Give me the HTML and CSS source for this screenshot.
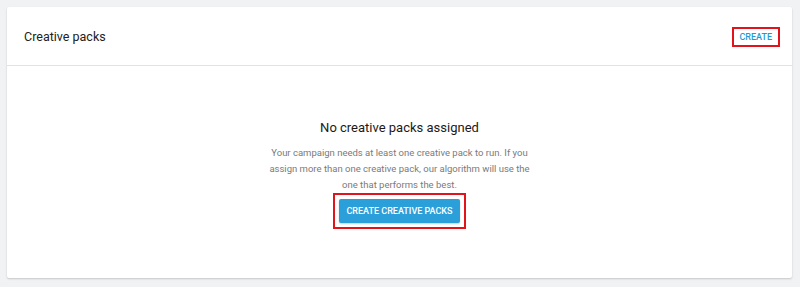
FILE: index.html
```html
<!DOCTYPE html>
<html lang="en">
<head>
    <meta charset="UTF-8">
    <meta name="viewport" content="width=device-width, initial-scale=1.0">
    <title>Creative packs</title>
    <link rel="stylesheet" href="styles.css">
</head>
<body>
    <div class="card">
        <div class="card-header">
            <span class="card-title">Creative packs</span>
            <a class="link-button marked" href="#">Create</a>
        </div>

        <!-- Пустое состояние -->
        <div class="empty-state">
            <h3>No creative packs assigned</h3>
            <p>Your campaign needs at least one creative pack to run. If you assign more than one creative pack, our algorithm will use the one that performs the best.</p>
            <span class="marked button-frame">
                <button class="primary-button">Create creative packs</button>
            </span>
        </div>
    </div>
</body>
</html>
```

FILE: styles.css
```css
body {
    font-family: Roboto, "Liberation Sans", sans-serif;
    background-color: #f1f2f4;
    color: #212121;
    margin: 0;
    padding: 7px 8px 9px 7px;
}

.card {
    background-color: #ffffff;
    border-radius: 2px;
    box-shadow: 0 1px 2px rgba(0, 0, 0, 0.18);
    height: 271px;
    display: flex;
    flex-direction: column;
}

.card-header {
    display: flex;
    justify-content: space-between;
    align-items: center;
    height: 58px;
    padding: 0 12px 0 17px;
    border-bottom: 1px solid #e2e2e2;
}

.card-title {
    font-size: 12.5px;
}

.link-button {
    color: #1e9ad6;
    font-size: 9px;
    font-weight: 500;
    text-transform: uppercase;
    text-decoration: none;
    padding: 3px 6px 3px 5px;
    margin-top: 2px;
}

.marked {
    border: 2px solid #e3131b;
}

.empty-state {
    display: flex;
    flex-direction: column;
    align-items: center;
    text-align: center;
    padding-top: 54px;
}

.empty-state h3 {
    font-size: 13px;
    font-weight: 400;
    color: #1a1a1a;
    margin: 0 0 10px;
}

.empty-state p {
    font-size: 9.5px;
    line-height: 16px;
    color: #7a7a7a;
    max-width: 272px;
    margin: 0;
}

.button-frame {
    display: inline-block;
    padding: 4px;
}

.primary-button {
    display: block;
    background-color: #2b9fd9;
    color: #ffffff;
    font-family: inherit;
    font-size: 9px;
    font-weight: 500;
    text-transform: uppercase;
    border: none;
    border-radius: 2px;
    height: 24px;
    padding: 0 7px;
    box-shadow: 0 1px 2px rgba(0, 0, 0, 0.2);
    cursor: pointer;
}
```
